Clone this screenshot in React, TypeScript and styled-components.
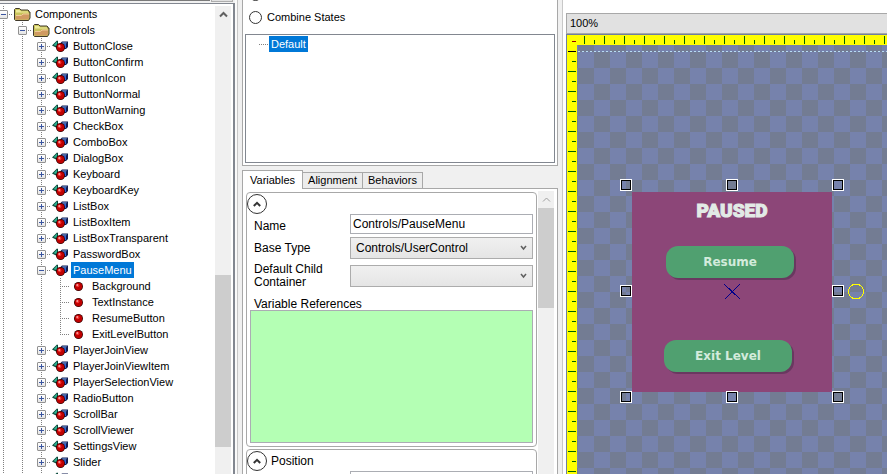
import React, { useState } from "react";
import styled, { createGlobalStyle, css } from "styled-components";

const GlobalStyle = createGlobalStyle`
  *, *::before, *::after { box-sizing: border-box; }
  html, body { margin: 0; height: 100%; overflow: hidden; }
  body {
    background: #f0f0f0;
    color: #000;
    font: 12px/13px "Liberation Sans", Arial, sans-serif;
  }
  button, input, select, textarea { font: inherit; color: inherit; margin: 0; border-radius: 0; }
`;

const Workspace = styled.main`
  display: grid;
  grid-template-columns: 242px 316px minmax(0, 1fr);
  height: 100vh;
  overflow: hidden;
`;

/* ---------- project tree ---------- */

const TreeColumn = styled.section`
  display: flex;
  flex-direction: column;
  min-height: 0;
  margin-right: 4px;
  padding-right: 2px;
  border-right: 1px solid #c8c8c8;
  background: #fafafa;
`;

const SearchStrip = styled.div`
  display: flex;
  height: 3px;
  flex: none;
  background: #f0f0f0;
`;

const SearchEdge = styled.div`
  flex: 1;
  height: 1px;
  background: #7a7a7a;
`;

const SearchButtonEdge = styled.div`
  width: 22px;
  height: 2px;
  margin: 0 2px 0 1px;
  background: #e1e1e1;
  border: 1px solid #adadad;
  border-top: 0;
`;

const TreeBox = styled.div`
  display: flex;
  flex: 1;
  min-height: 0;
  padding: 2px 2px 0 0;
  background: #fff;
  border-top: 1px solid #828790;
  border-right: 2px solid #828790;
`;

const TreeList = styled.ul`
  flex: 1;
  min-width: 0;
  margin: 0 0 0 -6px;
  padding: 0;
  overflow: hidden;
  list-style: none;
  font-size: 11px;
  line-height: 16px;
`;

const TreeRow = styled.li`
  display: flex;
  height: 16px;
  white-space: nowrap;
`;

type GuideKind = "line" | "tee" | "end";

const dots = (dir: string) => `repeating-linear-gradient(${dir}, #808080 0 1px, transparent 1px 2px)`;

const Guide = styled.span<{ $kind: GuideKind }>`
  display: grid;
  place-items: center;
  flex: none;
  width: 19px;
  height: 16px;
  padding-top: 1px;
  background-repeat: no-repeat;
  background-image: ${dots("to bottom")}, ${dots("to right")};
  background-position: 9px 0, 9px 8px;
  background-size: ${(p) => (p.$kind === "end" ? "1px 9px" : "1px 16px")},
    ${(p) => (p.$kind === "line" ? "0 0" : "10px 1px")};
`;

const Toggle = styled.button`
  display: block;
  width: 9px;
  height: 9px;
  padding: 0;
  border: 1px solid #919191;
  border-radius: 1px;
  background: linear-gradient(#fff, #e4e4e4);
  svg { display: block; }
`;

const TreeIcon = styled.svg`
  flex: none;
  width: 17px;
  height: 16px;
  margin-left: 1px;
`;

const TreeLabel = styled.span<{ $selected?: boolean }>`
  margin-left: 2px;
  padding: 0 2px;
  ${(p) => p.$selected && css`background: #0078d7; color: #fff;`}
`;

const FolderIcon = () => (
  <TreeIcon viewBox="0 0 17 16" aria-hidden="true">
    <path d="M.5 13.500V3.500l1-1h4L7 4h7l1 1v1h1v6l-1.500 2.500h-13z" fill="#c9c45c" stroke="#3f382a" />
    <path d="M2 4h3.500L7 5.500h7v1H2z" fill="#eeea9a" />
    <path d="M1.500 13.500V10L3 9h4l1.500-1H15v4l-1 1.500z" fill="#d09a62" />
    <path d="M2 9.500h5.500L9 8h6" fill="none" stroke="#f0cb9a" />
  </TreeIcon>
);

const Ball = ({ cx, cy }: { cx: number; cy: number }) => (
  <g>
    <circle cx={cx} cy={cy} r="4.500" fill="#3a0000" />
    <circle cx={cx} cy={cy} r="3.700" fill="#c00000" />
    <circle cx={cx - 0.8} cy={cy - 1} r="1.700" fill="#f03030" />
    <circle cx={cx - 1.3} cy={cy - 1.5} r=".8" fill="#ffd8d8" />
  </g>
);

const ComponentIcon = () => (
  <TreeIcon viewBox="0 0 17 16" aria-hidden="true">
    <path d="M0 7.500 5 2.500 6 3v6.500H4z" fill="#0b4638" />
    <path d="M1.500 7.200 5 3.500V8z" fill="#2fb894" />
    <path d="M8.500 5l1.500-1.500h6V9l-2 2H8.500z" fill="#101c50" />
    <path d="M9 6h5v4H9z" fill="#2c62dc" />
    <path d="M9.500 5.500l1-1H15l-1 1z" fill="#86b6ff" />
    <Ball cx={8.5} cy={9.5} />
  </TreeIcon>
);

const InstanceIcon = () => (
  <TreeIcon viewBox="0 0 17 16" aria-hidden="true">
    <Ball cx={7.5} cy={8.5} />
  </TreeIcon>
);

type Node = { name: string; level: number; open?: boolean; last?: boolean };

const items = (names: string[]): Node[] => names.map((name) => ({ name, level: 2, open: false }));

const nodes: Node[] = [
  { name: "Components", level: 0, open: true },
  { name: "Controls", level: 1, open: true },
  ...items([
    "ButtonClose", "ButtonConfirm", "ButtonIcon", "ButtonNormal", "ButtonWarning", "CheckBox", "ComboBox",
    "DialogBox", "Keyboard", "KeyboardKey", "ListBox", "ListBoxItem", "ListBoxTransparent", "PasswordBox",
  ]),
  { name: "PauseMenu", level: 2, open: true },
  { name: "Background", level: 3 },
  { name: "TextInstance", level: 3 },
  { name: "ResumeButton", level: 3 },
  { name: "ExitLevelButton", level: 3, last: true },
  ...items([
    "PlayerJoinView", "PlayerJoinViewItem", "PlayerSelectionView", "RadioButton", "ScrollBar",
    "ScrollViewer", "SettingsView", "Slider", "TextBox",
  ]),
];

const ProjectTree = () => (
  <TreeList role="tree" aria-label="Project">
    {nodes.map((n) => (
      <TreeRow key={n.name} role="treeitem" aria-level={n.level + 1} aria-expanded={n.open} aria-selected={n.name === "PauseMenu"}>
        {Array.from({ length: n.level }, (_, i) => <Guide key={i} $kind="line" />)}
        <Guide $kind={n.last ? "end" : "tee"}>
          {n.open !== undefined && (
            <Toggle type="button" aria-label={`${n.open ? "Collapse" : "Expand"} ${n.name}`}>
              <svg width="7" height="7" viewBox="0 0 7 7" aria-hidden="true">
                <path d={n.open ? "M1 3.500h5" : "M1 3.500h5M3.500 1v5"} stroke="#3a55a0" />
              </svg>
            </Toggle>
          )}
        </Guide>
        {n.level < 2 ? <FolderIcon /> : n.level === 2 ? <ComponentIcon /> : <InstanceIcon />}
        <TreeLabel $selected={n.name === "PauseMenu"}>{n.name}</TreeLabel>
      </TreeRow>
    ))}
  </TreeList>
);

/* ---------- scroll bars ---------- */

const ScrollTrack = styled.div`
  display: flex;
  flex-direction: column;
  flex: none;
  width: 16px;
  background: #f0f0f0;
`;

const ScrollArrow = styled.button`
  display: grid;
  place-items: center;
  flex: none;
  height: 17px;
  padding: 0;
  border: 0;
  background: transparent;
`;

const ScrollSpace = styled.div<{ $grow: number }>`
  flex: ${(p) => p.$grow} 0 0;
`;

const ScrollThumb = styled(ScrollSpace)`
  background: #cdcdcd;
`;

const ScrollBar = ({ before, thumb, after, muted }: { before: number; thumb: number; after: number; muted?: boolean }) => (
  <ScrollTrack>
    <ScrollArrow type="button" aria-label="Scroll up">
      <svg width="9" height="7" viewBox="0 0 9 7" aria-hidden="true">
        <path d="M1 5.500 4.500 2 8 5.500" fill="none" stroke={muted ? "#a0a0a0" : "#606060"} strokeWidth={muted ? 1 : 2} />
      </svg>
    </ScrollArrow>
    <ScrollSpace $grow={before} />
    <ScrollThumb $grow={thumb} />
    <ScrollSpace $grow={after} />
  </ScrollTrack>
);

/* ---------- states and variables ---------- */

const MiddleColumn = styled.section`
  display: flex;
  flex-direction: column;
  min-height: 0;
`;

const StatesPanel = styled.div`
  display: flex;
  flex-direction: column;
  flex: none;
  height: 166px;
  padding: 0 2px 2px;
  overflow: hidden;
  background: #fff;
  border: 1px solid #a8a8a8;
  border-top: 0;
`;

const StateModes = styled.div`
  display: flex;
  flex-direction: column;
  gap: 10px;
  margin: -12px 0 10px;
  padding-left: 4px;
`;

const RadioLabel = styled.label`
  display: flex;
  align-items: center;
  gap: 5px;
  height: 13px;
  font-size: 11px;
`;

const Radio = styled.input`
  appearance: none;
  width: 13px;
  height: 13px;
  border: 1px solid #333;
  border-radius: 50%;
  background: #fff;
  &:checked { background: radial-gradient(#333 0 3px, #fff 4px); }
`;

const StateList = styled.ul`
  flex: 1;
  margin: 0;
  padding: 1px 0 0 13px;
  border: 1px solid #828790;
  list-style: none;
  font-size: 11px;
  line-height: 16px;
`;

const StateItem = styled.li`
  display: flex;
  align-items: center;
`;

const StateGuide = styled.span`
  width: 10px;
  height: 1px;
  background: ${dots("to right")};
`;

const StateName = styled.span`
  padding: 0 2px;
  background: #0078d7;
  color: #fff;
`;

const Tabs = styled.div`
  display: flex;
  align-items: flex-end;
  flex: none;
  margin: 4px 0 -1px;
  z-index: 1;
`;

const Tab = styled.button`
  height: 16px;
  margin-bottom: 1px;
  padding: 0 5px;
  border: 1px solid #a8a8a8;
  border-bottom: 0;
  border-left-width: 0;
  background: #ececec;
  font-size: 11px;
  line-height: 15px;
  &[aria-selected="true"] {
    height: 19px;
    margin-bottom: 0;
    padding: 0 7px;
    border-left-width: 1px;
    background: #fff;
  }
`;

const VariablesPanel = styled.div`
  display: flex;
  flex: 1;
  min-height: 0;
  gap: 1px;
  padding: 2px 3px 0;
  overflow: hidden;
  background: #fff;
  border: 1px solid #a8a8a8;
  border-bottom: 0;
`;

const Groups = styled.div`
  display: flex;
  flex-direction: column;
  flex: 1;
  gap: 2px;
  min-width: 0;
  padding-top: 1px;
`;

const Group = styled.div`
  flex: none;
  padding: 1px 3px 3px 0;
  border: 1px solid #a8a8a8;
  border-radius: 4px;
`;

const GroupHead = styled.div`
  display: flex;
  align-items: center;
  gap: 4px;
  height: 20px;
`;

const Collapse = styled.button`
  display: grid;
  place-items: center;
  width: 20px;
  height: 20px;
  padding: 0;
  border: 1px solid #333;
  border-radius: 50%;
  background: #fff;
`;

const Fields = styled.div`
  display: grid;
  grid-template-columns: 100px minmax(0, 1fr);
  align-items: center;
  row-gap: 3px;
  margin-left: 3px;
`;

const FieldLabel = styled.label<{ $low?: boolean }>`
  align-self: ${(p) => (p.$low ? "end" : "center")};
  padding: 1px 4px;
`;

const TextField = styled.input`
  width: 100%;
  height: 20px;
  padding: 0 2px;
  border: 1px solid #abadb3;
  background: #fff;
`;

const SelectWrap = styled.div<{ $tall?: boolean }>`
  display: grid;
  align-items: center;
  height: ${(p) => (p.$tall ? 28 : 22)}px;
  > * { grid-area: 1 / 1; }
  > svg { justify-self: end; margin-right: 6px; pointer-events: none; }
`;

const Select = styled.select`
  appearance: none;
  width: 100%;
  height: 22px;
  padding: 0 20px 0 5px;
  border: 1px solid #acacac;
  background: linear-gradient(#f0f0f0, #e5e5e5);
`;

const ReferencesLabel = styled.label`
  display: block;
  margin: 8px 0 0 7px;
  line-height: 12px;
`;

const References = styled.textarea`
  display: block;
  width: calc(100% - 3px);
  height: 133px;
  margin-left: 3px;
  border: 1px solid #abadb3;
  background: #b4ffb4;
  resize: none;
`;

const CollapseButton = ({ label }: { label: string }) => (
  <Collapse type="button" aria-label={label}>
    <svg width="8" height="6" viewBox="0 0 8 6" aria-hidden="true">
      <path d="M.8 5 4 1.800 7.200 5" fill="none" stroke="#333" strokeWidth="2" />
    </svg>
  </Collapse>
);

const Chevron = () => (
  <svg width="7" height="6" viewBox="0 0 7 6" aria-hidden="true">
    <path d="M1 1l2.500 3L6 1" fill="none" stroke="#606060" strokeWidth="1.500" />
  </svg>
);

const Middle = () => {
  const [name, setName] = useState("Controls/PauseMenu");
  const [tab, setTab] = useState("Variables");
  return (
    <MiddleColumn>
      <StatesPanel>
        <StateModes>
          <RadioLabel><Radio type="radio" name="mode" defaultChecked />Single State</RadioLabel>
          <RadioLabel><Radio type="radio" name="mode" />Combine States</RadioLabel>
        </StateModes>
        <StateList>
          <StateItem><StateGuide /><StateName>Default</StateName></StateItem>
        </StateList>
      </StatesPanel>
      <Tabs role="tablist">
        {["Variables", "Alignment", "Behaviors"].map((t) => (
          <Tab key={t} type="button" role="tab" aria-selected={t === tab} onClick={() => setTab(t)}>{t}</Tab>
        ))}
      </Tabs>
      <VariablesPanel>
        <Groups>
          <Group>
            <GroupHead><CollapseButton label="Collapse general" /></GroupHead>
            <Fields>
              <FieldLabel htmlFor="name" $low>Name</FieldLabel>
              <TextField id="name" value={name} onChange={(e) => setName(e.target.value)} />
              <FieldLabel htmlFor="base">Base Type</FieldLabel>
              <SelectWrap>
                <Select id="base"><option>Controls/UserControl</option></Select>
                <Chevron />
              </SelectWrap>
              <FieldLabel htmlFor="child">Default Child Container</FieldLabel>
              <SelectWrap $tall>
                <Select id="child"><option></option></Select>
                <Chevron />
              </SelectWrap>
            </Fields>
            <ReferencesLabel htmlFor="refs">Variable References</ReferencesLabel>
            <References id="refs" />
          </Group>
          <Group>
            <GroupHead><CollapseButton label="Collapse position" />Position</GroupHead>
            <Fields>
              <span />
              <TextField aria-label="Position value" />
            </Fields>
          </Group>
        </Groups>
        <ScrollBar before={0} thumb={100} after={166} muted />
      </VariablesPanel>
    </MiddleColumn>
  );
};

/* ---------- canvas ---------- */

const EditorColumn = styled.section`
  display: flex;
  flex-direction: column;
  min-width: 0;
  min-height: 0;
  margin-left: 4px;
  padding: 13px 0 0 3px;
  border-left: 1px solid #c8c8c8;
  background: #fff;
`;

const ZoomBar = styled.header`
  flex: none;
  height: 21px;
  padding: 0 3px;
  border: 1px solid #a8a8a8;
  border-right: 0;
  background: #e1e1e1;
  font-size: 11px;
  line-height: 19px;
`;

const View = styled.div`
  display: grid;
  grid-template: 10px minmax(0, 1fr) / 10px minmax(0, 1fr);
  flex: 1;
  min-height: 0;
  border: 1px solid #6f7fa0;
  border-right: 0;
  border-bottom: 0;
  background: #ff0;
`;

const TopRuler = styled.div`
  grid-column: 2;
  background-repeat: repeat-x;
  background-image:
    linear-gradient(90deg, #006400 1px, transparent 1px),
    linear-gradient(90deg, #006400 1px, transparent 1px);
  background-size: 20px 8px, 20px 4px;
  background-position: 7px 1px, 17px 5px;
`;

const SideRuler = styled.div`
  background-image:
    linear-gradient(#000 1px, transparent 1px),
    linear-gradient(#006400 1px, transparent 1px),
    linear-gradient(#006400 1px, transparent 1px);
  background-repeat: no-repeat, repeat-y, repeat-y;
  background-size: 8px 1px, 8px 20px, 4px 20px;
  background-position: 1px 6px, 1px 6px, 5px 16px;
`;

const Corner = styled.div`
  background: linear-gradient(#960000, #960000) 5px 6px / 4px 1px no-repeat;
`;

const Stage = styled.div`
  position: relative;
  overflow: hidden;
  background:
    repeating-linear-gradient(90deg, #b8dcf4 0 2px, transparent 2px 4px) 1px 6px / 100% 1px no-repeat,
    repeating-conic-gradient(#737c93 0 25%, #7682ac 0 50%) 1px 7px / 32px 32px;
`;

const Menu = styled.div`
  position: absolute;
  left: 55px;
  top: 147px;
  width: 200px;
  height: 200px;
  background: #8c4678;
`;

const Title = styled.h1`
  margin: 8px 0 0;
  color: #e2eae6;
  font: 900 19px/22px Roboto, "Liberation Sans", sans-serif;
  text-align: center;
  -webkit-text-stroke: 1px #e2eae6;
`;

const MenuButton = styled.button<{ $x: number; $y: number }>`
  position: absolute;
  left: ${(p) => p.$x}px;
  top: ${(p) => p.$y}px;
  width: 128px;
  height: 32px;
  padding: 0;
  border: 0;
  border-radius: 12px;
  background: #50a070;
  box-shadow: 2px 2px 0 #693860;
  color: #d3ebdc;
  font: bold 12px/32px "DejaVu Sans", Verdana, sans-serif;
`;

const Handle = styled.span<{ $x: number; $y: number }>`
  position: absolute;
  left: ${(p) => p.$x}px;
  top: ${(p) => p.$y}px;
  width: 12px;
  height: 12px;
  border: 1px solid #fff;
  outline: 1px solid #000;
  outline-offset: -2px;
`;

const Gizmo = styled.svg`
  position: absolute;
  left: 146px;
  top: 238px;
`;

const handles = [
  [43, 134], [149, 134], [255, 134],
  [43, 240], [255, 240],
  [43, 346], [149, 346], [255, 346],
];

const Editor = () => (
  <EditorColumn>
    <ZoomBar>100%</ZoomBar>
    <View>
      <Corner />
      <TopRuler />
      <SideRuler />
      <Stage>
        <Menu>
          <Title>PAUSED</Title>
          <MenuButton type="button" $x={34} $y={54}>Resume</MenuButton>
          <MenuButton type="button" $x={32} $y={148}>Exit Level</MenuButton>
        </Menu>
        {handles.map(([x, y]) => <Handle key={`${x}-${y}`} $x={x} $y={y} />)}
        <Gizmo width="144" height="18" viewBox="0 0 144 18" aria-hidden="true" shapeRendering="crispEdges">
          <path d="M1 1l16 15M17 1L2 16" stroke="#00008b" fill="none" />
          <circle cx="133" cy="8.500" r="7.500" stroke="#ff0" fill="none" />
        </Gizmo>
      </Stage>
    </View>
  </EditorColumn>
);

export default function App() {
  return (
    <>
      <GlobalStyle />
      <Workspace>
        <TreeColumn>
          <SearchStrip><SearchEdge /><SearchButtonEdge /></SearchStrip>
          <TreeBox>
            <ProjectTree />
            <ScrollBar before={252} thumb={172} after={27} />
          </TreeBox>
        </TreeColumn>
        <Middle />
        <Editor />
      </Workspace>
    </>
  );
}
